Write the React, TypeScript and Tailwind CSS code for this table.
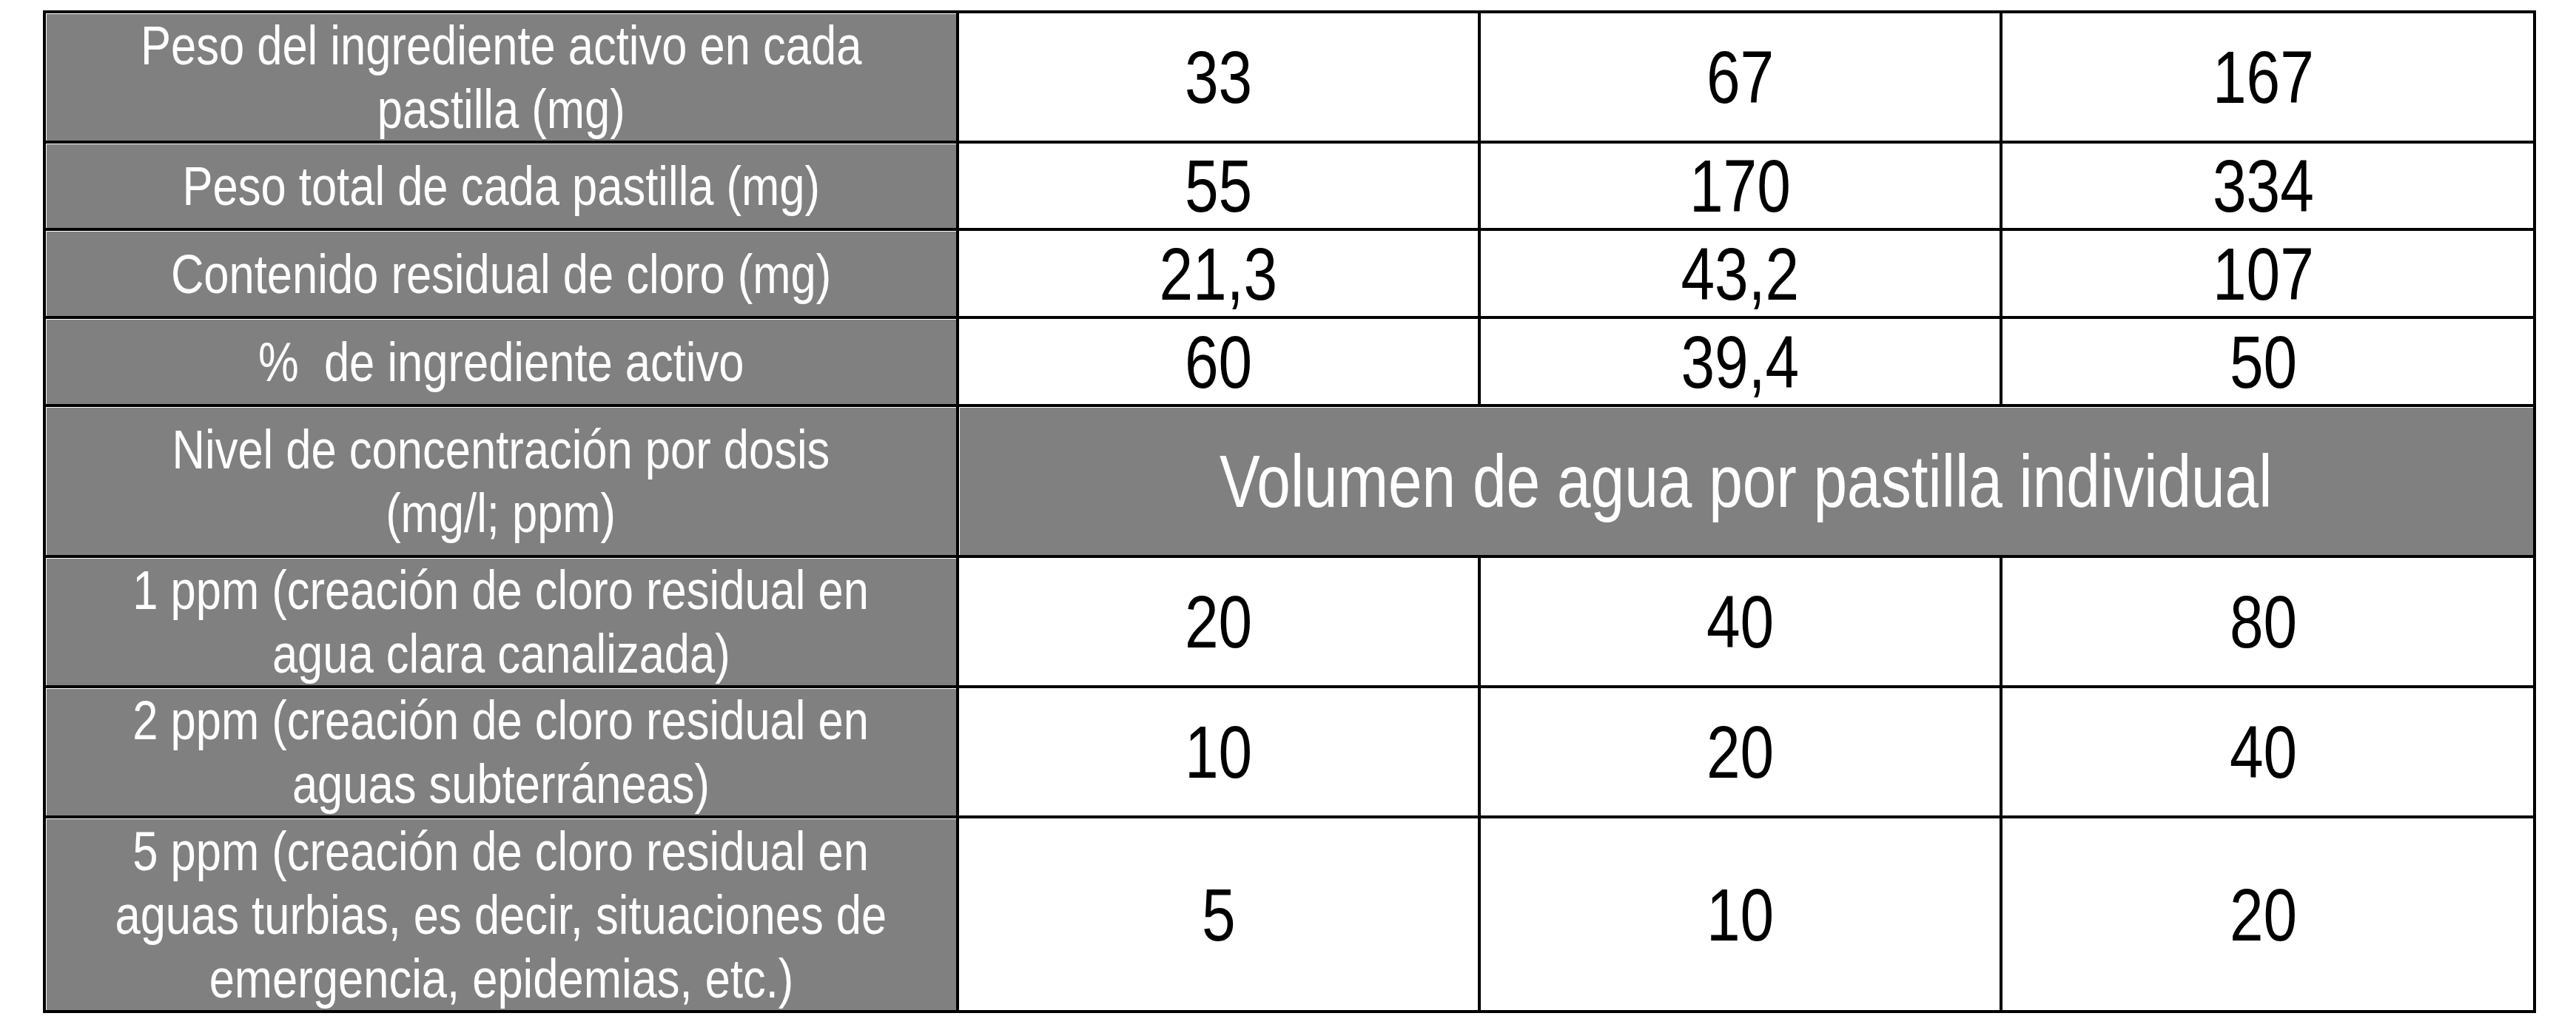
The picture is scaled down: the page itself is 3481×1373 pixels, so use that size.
import React from "react";

// Arial Narrow no está instalada: Liberation Sans comprimida horizontalmente
const font = { fontFamily: '"Liberation Sans", Arial, sans-serif' };

type Row = {
  h: string;
  label: string[];
  values?: string[];
  merged?: string;
  first?: boolean;
};

const rows: Row[] = [
  { h: "h-[172px]", label: ["Peso del ingrediente activo en cada", "pastilla (mg)"], values: ["33", "67", "167"], first: true },
  { h: "h-[118px]", label: ["Peso total de cada pastilla (mg)"], values: ["55", "170", "334"] },
  { h: "h-[119px]", label: ["Contenido residual de cloro (mg)"], values: ["21,3", "43,2", "107"] },
  { h: "h-[119px]", label: ["%\u00a0\u00a0de ingrediente activo"], values: ["60", "39,4", "50"] },
  { h: "h-[204px]", label: ["Nivel de concentración por dosis", "(mg/l; ppm)"], merged: "Volumen de agua por pastilla individual" },
  { h: "h-[176px]", label: ["1 ppm (creación de cloro residual en", "agua clara canalizada)"], values: ["20", "40", "80"] },
  { h: "h-[176px]", label: ["2 ppm (creación de cloro residual en", "aguas subterráneas)"], values: ["10", "20", "40"] },
  {
    h: "h-[263px]",
    label: ["5 ppm (creación de cloro residual en", "aguas turbias, es decir, situaciones de", "emergencia, epidemias, etc.)"],
    values: ["5", "10", "20"],
  },
];

const Narrow = ({ children }: { children: React.ReactNode }) => (
  <span className="inline-block scale-x-[0.82] whitespace-nowrap">{children}</span>
);

const App = () => {
  return (
    <div className="min-h-screen bg-white pt-[14px] pl-[58px]" style={font}>
      <div className="w-[3369px] border-4 border-black">
        {rows.map((row, i) => (
          <div key={i} className={`flex ${row.h} ${row.first ? "" : "border-t-4 border-black"}`}>
            {/* etiqueta */}
            <div className="w-[1234px] shrink-0 border-r-4 border-black bg-[#808080] shadow-[inset_1px_1px_0_#ffffff] flex flex-col items-center justify-center text-white text-[75px] leading-[86px] text-center">
              {row.label.map((l, j) => (
                <Narrow key={j}>{l}</Narrow>
              ))}
            </div>
            {row.merged ? (
              <div className="flex-1 bg-[#808080] shadow-[inset_1px_1px_0_#ffffff] flex items-center justify-center text-white text-[100px] leading-none">
                <Narrow>{row.merged}</Narrow>
              </div>
            ) : (
              row.values!.map((v, j) => (
                <div
                  key={j}
                  className={`w-[705px] shrink-0 flex items-center justify-center text-black text-[100px] leading-none ${j < 2 ? "border-r-4 border-black" : ""}`}
                >
                  <Narrow>{v}</Narrow>
                </div>
              ))
            )}
          </div>
        ))}
      </div>
    </div>
  );
};

export default App;
